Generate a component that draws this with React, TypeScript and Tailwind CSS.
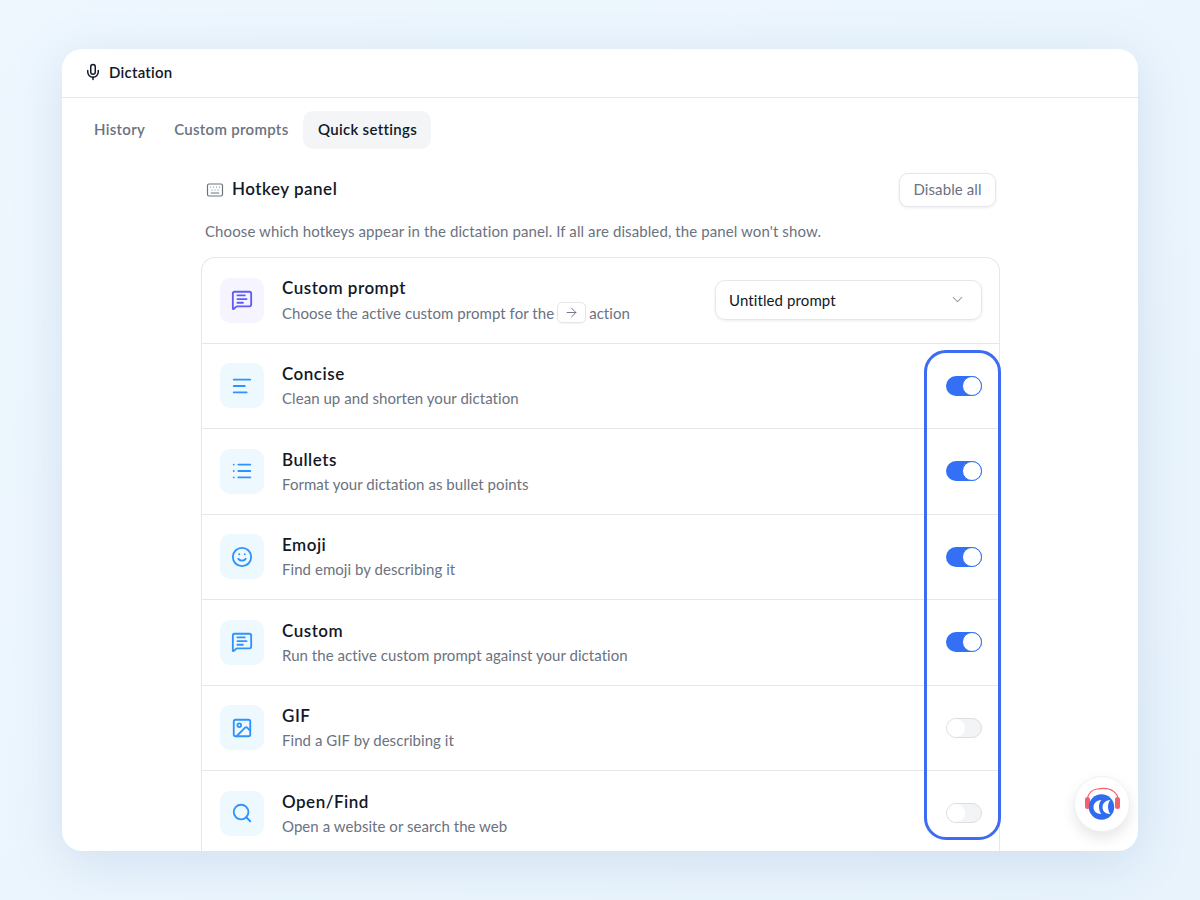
import React from "react";
import { Mic, Keyboard, MessageSquareText, AlignLeft, List, Smile, Image, Search, ChevronDown, ArrowRight } from "lucide-react";

type Row = { title: string; desc: string; icon: React.ElementType; on: boolean };

const rows: Row[] = [
  { title: "Concise", desc: "Clean up and shorten your dictation", icon: AlignLeft, on: true },
  { title: "Bullets", desc: "Format your dictation as bullet points", icon: List, on: true },
  { title: "Emoji", desc: "Find emoji by describing it", icon: Smile, on: true },
  { title: "Custom", desc: "Run the active custom prompt against your dictation", icon: MessageSquareText, on: true },
  { title: "GIF", desc: "Find a GIF by describing it", icon: Image, on: false },
  { title: "Open/Find", desc: "Open a website or search the web", icon: Search, on: false },
];

function Toggle({ on }: { on: boolean }) {
  return on ? (
    <div className="flex h-5 w-9 justify-end rounded-full bg-[#3370f6]">
      <div className="h-5 w-5 rounded-full border border-[#3370f6] bg-white" />
    </div>
  ) : (
    <div className="h-5 w-9 rounded-full border border-[#dcdee2] bg-[#f3f4f6]">
      <div className="h-[18px] w-[18px] rounded-full bg-white" />
    </div>
  );
}

function IconBox({ icon: Icon, violet }: { icon: React.ElementType; violet?: boolean }) {
  return (
    <div className={`flex h-[45px] w-[44px] shrink-0 items-center justify-center rounded-[10px] ${violet ? "bg-[#f5f4ff] text-[#5f5bf6]" : "bg-[#eef8ff] text-[#2f93fb]"}`}>
      <Icon size={22} strokeWidth={2} />
    </div>
  );
}

function Logo() {
  return (
    <svg width="38" height="34" viewBox="0 0 38 34" fill="none">
      <path d="M4 12C6 6 8 3 14 2c6-1 12-1 16 2c3 2 5 5 5 9" stroke="#f2606b" strokeWidth="1.1" />
      <rect x="2" y="10" width="5" height="12" rx="2.5" fill="#f2606b" />
      <rect x="32" y="10" width="5" height="12" rx="2.5" fill="#f2606b" />
      <circle cx="18.5" cy="20" r="12.7" fill="#2f6cf0" />
      <path d="M18.5 13C13 13 10.5 17 10.5 20C10.5 24 13 27 18.5 27C15.5 24 15 16 18.5 13Z" fill="#fff" />
      <path d="M27.5 13C22 13 19.5 17 19.5 20C19.5 24 22 27 27.5 27C24.5 24 24 16 27.5 13Z" fill="#fff" />
    </svg>
  );
}

export default function App() {
  return (
    <div className="h-[900px] w-[1200px] overflow-hidden bg-gradient-to-br from-[#eef7fe] to-[#e8f3fc] px-[62px] pt-[49px] font-['Lato',sans-serif]">
      <div className="relative h-[802px] overflow-hidden rounded-[20px] bg-white shadow-[0_10px_50px_rgba(90,130,180,0.18)]">
        <div className="flex h-[49px] items-center gap-[7px] border-b border-[#e5e7eb] pb-[2px] pl-[22px] text-[#111827]">
          <Mic size={18} strokeWidth={2} />
          <span className="text-[15px] font-semibold tracking-[0.25px]">Dictation</span>
        </div>

        <div className="mt-[13px] flex items-center pl-[18px] text-[15px] font-semibold tracking-[0.3px]">
          <div className="flex h-[38px] items-center px-[14px] pb-[2px] text-[#6b7280]">History</div>
          <div className="flex h-[38px] items-center px-[15px] pb-[2px] text-[#6b7280]">Custom prompts</div>
          <div className="flex h-[38px] w-[128px] items-center justify-center rounded-[10px] bg-[#f4f5f7] pb-[2px] text-[#111827]">Quick settings</div>
        </div>

        <div className="ml-[139px] w-[799px]">
          <div className="mt-[24px] flex h-[34px] items-center pl-[5px] pr-[4px]">
            <Keyboard size={18} strokeWidth={1.6} className="text-[#6b7280]" />
            <span className="ml-[8px] pb-[2px] text-[17px] font-semibold tracking-[0.5px] text-[#111827]">Hotkey panel</span>
            <button className="ml-auto h-[34px] w-[97px] rounded-[9px] border border-[#e5e7eb] pb-[2px] text-[15px] tracking-[0.1px] text-[#6b7280] shadow-[0_1px_3px_rgba(0,0,0,0.08)]">Disable all</button>
          </div>
          <p className="mt-[14px] pl-[4px] text-[15px] leading-[20px] tracking-[0.1px] text-[#6b7280]">
            Choose which hotkeys appear in the dictation panel. If all are disabled, the panel won't show.
          </p>

          <div className="mt-[16px] rounded-t-[14px] border border-b-0 border-[#e5e7eb]">
            <div className="flex h-[85.5px] items-center border-b border-[#e5e7eb] pl-[18px] pr-[17px]">
              <IconBox icon={MessageSquareText} violet />
              <div className="ml-[18px]">
                <div className="text-[17px] font-semibold leading-[22px] tracking-[0.5px] text-[#111827]">Custom prompt</div>
                <div className="mt-[3px] flex items-center text-[15px] leading-[20px] tracking-[0.05px] text-[#6b7280]">
                  Choose the active custom prompt for the
                  <span className="mx-[3px] flex h-[21px] w-[29px] items-center justify-center rounded-[5px] border border-[#e5e7eb] shadow-[0_1px_1px_rgba(0,0,0,0.05)]">
                    <ArrowRight size={15} strokeWidth={1.5} />
                  </span>
                  action
                </div>
              </div>
              <div className="ml-auto flex h-[40px] w-[267px] items-center justify-between rounded-[10px] border border-[#e5e7eb] pb-[1px] pl-[13px] pr-[15px] text-[15px] tracking-[0.1px] text-[#111827] shadow-[0_1px_3px_rgba(0,0,0,0.08)]">
                Untitled prompt
                <ChevronDown size={17} strokeWidth={1.6} className="text-[#9ca3af]" />
              </div>
            </div>

            {rows.map((r) => (
              <div key={r.title} className="flex h-[85.5px] items-center border-b border-[#e5e7eb] pl-[18px] pr-[17px]">
                <IconBox icon={r.icon} />
                <div className="ml-[18px]">
                  <div className="text-[17px] font-semibold leading-[22px] tracking-[0.5px] text-[#111827]">{r.title}</div>
                  <div className="mt-[3px] text-[15px] leading-[20px] tracking-[0.05px] text-[#6b7280]">{r.desc}</div>
                </div>
                <div className="ml-auto">
                  <Toggle on={r.on} />
                </div>
              </div>
            ))}
          </div>
        </div>

        <div className="absolute left-[862px] top-[301px] h-[490px] w-[77px] rounded-[22px] border-[3px] border-[#3d6bf3]" />

        <div className="absolute left-[1012px] top-[727px] flex h-[56px] w-[56px] items-center justify-center rounded-full border border-[#eef0f2] bg-white shadow-[0_6px_14px_rgba(0,0,0,0.1)]">
          <Logo />
        </div>
      </div>
    </div>
  );
}
